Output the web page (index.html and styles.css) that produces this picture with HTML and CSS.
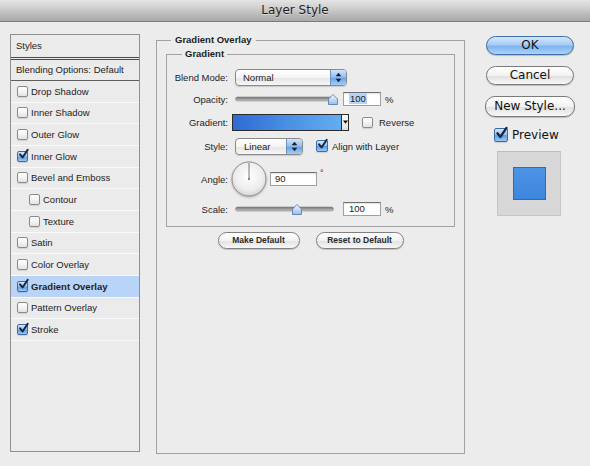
FILE: index.html
```html
<!DOCTYPE html>
<html>
<head>
<meta charset="utf-8">
<title>Layer Style</title>
<link rel="stylesheet" href="styles.css">
</head>
<body>
<div class="titlebar">Layer Style</div>
<div class="main">
  <aside class="styles-panel">
    <div class="sp-head">Styles</div>
    <div class="sp-blend">Blending Options: Default</div>
    <ul class="sp-list">
      <li><span class="cb"></span>Drop Shadow</li>
      <li><span class="cb"></span>Inner Shadow</li>
      <li><span class="cb"></span>Outer Glow</li>
      <li><span class="cb on"><svg class="tick" viewBox="0 0 12 12"><path d="M2.2 5.8 L5 9.2 L10.6 0.8" fill="none" stroke="#15233f" stroke-width="2.1" stroke-linecap="round" stroke-linejoin="round"/></svg></span>Inner Glow</li>
      <li><span class="cb"></span>Bevel and Emboss</li>
      <li class="sub"><span class="cb"></span>Contour</li>
      <li class="sub"><span class="cb"></span>Texture</li>
      <li><span class="cb"></span>Satin</li>
      <li><span class="cb"></span>Color Overlay</li>
      <li class="active"><span class="cb on"><svg class="tick" viewBox="0 0 12 12"><path d="M2.2 5.8 L5 9.2 L10.6 0.8" fill="none" stroke="#15233f" stroke-width="2.1" stroke-linecap="round" stroke-linejoin="round"/></svg></span>Gradient Overlay</li>
      <li><span class="cb"></span>Pattern Overlay</li>
      <li><span class="cb on"><svg class="tick" viewBox="0 0 12 12"><path d="M2.2 5.8 L5 9.2 L10.6 0.8" fill="none" stroke="#15233f" stroke-width="2.1" stroke-linecap="round" stroke-linejoin="round"/></svg></span>Stroke</li>
    </ul>
  </aside>

  <fieldset class="group outer">
    <legend>Gradient Overlay</legend>
    <fieldset class="group inner">
      <legend>Gradient</legend>

      <div class="row r1">
        <label>Blend Mode:</label>
        <div class="select wide">
          <span class="val">Normal</span>
          <span class="arr"><svg viewBox="0 0 7 11" width="7" height="11"><path d="M3.5 0.8 L6.3 4.2 L0.7 4.2Z M0.7 6.8 L6.3 6.8 L3.5 10.2Z" fill="#142033"/></svg></span>
        </div>
      </div>

      <div class="row r2">
        <label>Opacity:</label>
        <svg class="slider" width="106" height="14" viewBox="0 0 106 14">
          <defs>
            <linearGradient id="tr1" x1="0" y1="0" x2="0" y2="1"><stop offset="0" stop-color="#6f6f6f"/><stop offset="1" stop-color="#c9c9c9"/></linearGradient>
            <linearGradient id="th1" x1="0" y1="0" x2="0" y2="1"><stop offset="0" stop-color="#f4f8fe"/><stop offset="1" stop-color="#94bdf0"/></linearGradient>
          </defs>
          <rect x="0.5" y="5" width="99" height="4" rx="2" fill="url(#tr1)" stroke="#8a8a8a" stroke-width="0.6"/>
          <path d="M93.5 12.5 L93.5 7 L98 2.5 L102.5 7 L102.5 12.5 Z" fill="url(#th1)" stroke="#5a7fb0" stroke-width="0.9" stroke-linejoin="round"/>
        </svg>
        <div class="field w38"><span class="sel">100</span></div>
        <span class="unit">%</span>
      </div>

      <div class="row r3">
        <label>Gradient:</label>
        <div class="swatch">
          <span class="fill"></span>
          <span class="drop"><svg viewBox="0 0 5 4" width="5" height="4"><path d="M0 0.5 L5 0.5 L2.5 3.8Z" fill="#111"/></svg></span>
        </div>
        <span class="cb cb-rev"></span>
        <span class="cb-text rev-text">Reverse</span>
      </div>

      <div class="row r4">
        <label>Style:</label>
        <div class="select small">
          <span class="val">Linear</span>
          <span class="arr"><svg viewBox="0 0 7 11" width="7" height="11"><path d="M3.5 0.8 L6.3 4.2 L0.7 4.2Z M0.7 6.8 L6.3 6.8 L3.5 10.2Z" fill="#142033"/></svg></span>
        </div>
        <span class="cb on cb-align"><svg class="tick" viewBox="0 0 12 12"><path d="M2.2 5.8 L5 9.2 L10.6 0.8" fill="none" stroke="#15233f" stroke-width="2.1" stroke-linecap="round" stroke-linejoin="round"/></svg></span>
        <span class="cb-text align-text">Align with Layer</span>
      </div>

      <div class="row r5">
        <label>Angle:</label>
        <svg class="dial" width="36" height="36" viewBox="0 0 36 36">
          <defs>
            <radialGradient id="dg" cx="0.5" cy="0.42" r="0.6"><stop offset="0" stop-color="#ffffff"/><stop offset="0.7" stop-color="#ececec"/><stop offset="1" stop-color="#d2d2d2"/></radialGradient>
          </defs>
          <circle cx="18" cy="18" r="17" fill="url(#dg)" stroke="#8e8e8e" stroke-width="1"/>
          <line x1="18" y1="18" x2="18" y2="2" stroke="#6a6a6a" stroke-width="0.9"/>
          <circle cx="18" cy="18" r="1" fill="#6a6a6a"/>
        </svg>
        <div class="field w47 angle">90</div>
        <span class="deg">°</span>
      </div>

      <div class="row r6">
        <label>Scale:</label>
        <svg class="slider" width="106" height="14" viewBox="0 0 106 14">
          <defs>
            <linearGradient id="tr2" x1="0" y1="0" x2="0" y2="1"><stop offset="0" stop-color="#6f6f6f"/><stop offset="1" stop-color="#c9c9c9"/></linearGradient>
            <linearGradient id="th2" x1="0" y1="0" x2="0" y2="1"><stop offset="0" stop-color="#f4f8fe"/><stop offset="1" stop-color="#94bdf0"/></linearGradient>
          </defs>
          <rect x="0.5" y="5" width="98" height="4" rx="2" fill="url(#tr2)" stroke="#8a8a8a" stroke-width="0.6"/>
          <path d="M57.5 12.5 L57.5 7 L62 2.5 L66.5 7 L66.5 12.5 Z" fill="url(#th2)" stroke="#5a7fb0" stroke-width="0.9" stroke-linejoin="round"/>
        </svg>
        <div class="field w38">100</div>
        <span class="unit">%</span>
      </div>
    </fieldset>

    <div class="btn-row">
      <button class="mini make">Make Default</button>
      <button class="mini reset">Reset to Default</button>
    </div>
  </fieldset>

  <div class="side">
    <button class="big ok">OK</button>
    <button class="big cancel">Cancel</button>
    <button class="big newstyle">New Style...</button>
    <div class="preview-row">
      <span class="cb on cb-big"><svg class="tick" viewBox="0 0 12 12"><path d="M2.2 5.8 L5 9.2 L10.6 0.8" fill="none" stroke="#15233f" stroke-width="2.1" stroke-linecap="round" stroke-linejoin="round"/></svg></span>
      <span class="preview-label">Preview</span>
    </div>
    <div class="preview-box"><div class="preview-square"></div></div>
  </div>
</div>
</body>
</html>
```

FILE: styles.css
```css
* { box-sizing: border-box; }

html, body { margin: 0; padding: 0; }

body {
  width: 590px;
  height: 466px;
  overflow: hidden;
  background: #ececec;
  font-family: "Liberation Sans", Arial, sans-serif;
  font-size: 9.5px;
  color: #1c1c1c;
}

.titlebar {
  height: 22px;
  border-bottom: 1px solid #7c7c7c;
  background: linear-gradient(#e4e4e4, #cbcbcb 45%, #b6b6b6 75%, #a9a9a9);
  text-align: center;
  font: 12px/21px "DejaVu Sans", sans-serif;
  color: #1e1e1e;
  text-shadow: 0 1px 0 rgba(255,255,255,0.45);
}

.main {
  display: flex;
  align-items: flex-start;
}

/* ---------- left styles list ---------- */
.styles-panel {
  margin: 12px 0 0 10px;
  width: 130px;
  height: 418px;
  border: 1px solid #8f8f8f;
  background: #ebebeb;
}

.sp-head {
  height: 25px;
  line-height: 22px;
  padding-left: 5px;
  border-bottom: 3px double #4a4a4a;
}

.sp-blend {
  height: 21px;
  line-height: 20px;
  padding-left: 5px;
  border-bottom: 1px solid #5f5f5f;
}

.sp-list {
  list-style: none;
  margin: 0;
  padding: 0;
}

.sp-list li {
  height: 21.67px;
  display: flex;
  align-items: center;
  gap: 3px;
  padding-left: 6px;
  border-bottom: 1px solid #fafafa;
}

.sp-list li.sub { padding-left: 18px; }

.sp-list li.active {
  background: #b8d4f8;
  font-weight: bold;
}

/* ---------- checkboxes ---------- */
.cb {
  flex: none;
  width: 11px;
  height: 11px;
  border: 1px solid #8b8b8b;
  border-radius: 2px;
  background: linear-gradient(#ffffff, #f3f3f3 50%, #e2e2e2);
  box-shadow: 0 1px 1px rgba(0,0,0,0.12);
  display: inline-flex;
  align-items: center;
  justify-content: center;
  overflow: visible;
}

.cb.on {
  border-color: #3f6aa6;
  background: linear-gradient(#d8e8fb, #8fbdf0 50%, #5d9ce6 55%, #9ac8f5);
}

.cb .tick {
  width: 11px;
  height: 11px;
  margin: -3px 0 0 1px;
  overflow: visible;
  flex: none;
}

.cb-big {
  width: 14px;
  height: 14px;
}

.cb-big .tick {
  width: 13px;
  height: 13px;
  margin: -4px 0 0 1px;
}

/* ---------- fieldset groups ---------- */
.group {
  margin: 0;
  border: 1px solid #a2a2a2;
  min-width: 0;
}

.group legend {
  font-weight: bold;
  line-height: 12px;
  height: 12px;
}

.outer {
  margin: 12px 0 0 16px;
  width: 309px;
  height: 420px;
  padding: 2px 9px 0 9px;
}

.outer > legend {
  padding: 0 4px;
  margin-left: 5px;
}

.inner {
  width: 289px;
  padding: 6px 0 8px 0;
}

.inner > legend {
  padding: 0 3px;
  margin-left: 15px;
}

/* ---------- rows ---------- */
.row {
  display: flex;
  align-items: center;
}

.row label {
  flex: none;
  width: 61px;
  margin-right: 7px;
  text-align: right;
}

.r1 { height: 22px; }
.r2 { height: 22px; }
.r3 { height: 24px; }
.r4 { height: 24px; }
.r5 { height: 42px; }
.r6 { height: 18px; }

/* popup selects */
.select {
  flex: none;
  display: flex;
  height: 17px;
  border: 1px solid #8a8a8a;
  border-radius: 4px;
  overflow: hidden;
  background: linear-gradient(#ffffff, #f4f4f4 50%, #e6e6e6 55%, #f6f6f6);
  box-shadow: 0 1px 1px rgba(0,0,0,0.15);
}

.select .val {
  flex: 1;
  line-height: 15px;
  padding-left: 7px;
}

.select .arr {
  flex: none;
  width: 16px;
  border-left: 1px solid #6f8fbf;
  background: linear-gradient(#d3e4f9, #93bdf0 48%, #6aa3e8 55%, #a4cdf6);
  display: flex;
  align-items: center;
  justify-content: center;
}

.select.wide { width: 112px; }
.select.small { width: 68px; }
.select.small .val { padding-left: 8px; }

/* sliders */
.slider {
  flex: none;
  display: block;
}

/* text fields */
.field {
  flex: none;
  height: 14px;
  margin-left: 2px;
  padding-left: 5px;
  line-height: 12px;
  background: #ffffff;
  border: 1px solid #a0a0a0;
  border-top-color: #707070;
  box-shadow: inset 0 1px 1px rgba(0,0,0,0.12);
}

.field.w38 { width: 38px; }
.field.w47 { width: 47px; }
.field.angle { margin-left: 3px; padding-left: 4px; }

.field .sel {
  background: #b3d3fb;
  padding: 0 1px;
}

.unit { margin-left: 4px; }

.deg {
  margin-left: 3px;
  align-self: flex-start;
  margin-top: 10px;
  font-size: 9px;
}

/* gradient swatch */
.swatch {
  flex: none;
  display: flex;
  width: 117px;
  height: 17px;
  margin-left: -3px;
  border: 1px solid #2b2b2b;
}

.swatch .fill {
  flex: 1;
  background: linear-gradient(90deg, #2d6bd3, #4a8fe3 50%, #63adf0);
}

.swatch .drop {
  flex: none;
  width: 7px;
  border-left: 1px solid #2b2b2b;
  background: linear-gradient(#ffffff, #dedede);
  display: flex;
  align-items: center;
  justify-content: center;
}

.cb-rev { margin-left: 13px; }
.rev-text { margin-left: 6px; }
.cb-align { margin-left: 13px; width: 12px; height: 12px; }
.align-text { margin-left: 4px; }

/* angle dial */
.dial {
  flex: none;
  display: block;
  margin-left: -4px;
  filter: drop-shadow(0 1px 1px rgba(0,0,0,0.25));
}

/* bottom mini buttons */
.btn-row {
  display: flex;
  justify-content: center;
  gap: 16px;
  margin-top: 5px;
}

.mini {
  height: 17px;
  padding: 0;
  border: 1px solid #808080;
  border-radius: 9px;
  background: linear-gradient(#ffffff, #f3f3f3 50%, #e3e3e3 55%, #f7f7f7);
  box-shadow: 0 1px 1px rgba(0,0,0,0.18);
  font-family: "Liberation Sans", Arial, sans-serif;
  font-size: 8.5px;
  font-weight: bold;
  color: #2a2a2a;
  line-height: 15px;
}

.mini.make { width: 82px; }
.mini.reset { width: 88px; }

/* ---------- right side ---------- */
.side {
  flex: none;
  width: 90px;
  margin: 14px 0 0 20px;
  display: flex;
  flex-direction: column;
  align-items: flex-start;
}

.big {
  width: 88px;
  height: 19px;
  margin-left: 1px;
  padding: 0;
  border: 1px solid #7a7a7a;
  border-radius: 10px;
  background: linear-gradient(#ffffff, #f2f2f2 50%, #e1e1e1 55%, #f8f8f8);
  box-shadow: 0 1px 1px rgba(0,0,0,0.2);
  font-family: "DejaVu Sans", sans-serif;
  font-size: 12px;
  line-height: 17px;
  color: #111;
}

.big.ok {
  border-color: #3f6ea9;
  background: linear-gradient(#d2e7fc, #a6cdf5 45%, #7fb4ee 55%, #a9d4fa);
}

.big.cancel { margin-top: 11px; }

.big.newstyle {
  margin-top: 11px;
  margin-left: 0;
  width: 90px;
  height: 21px;
  line-height: 19px;
}

.preview-row {
  margin: 11px 0 0 9px;
  display: flex;
  align-items: center;
  height: 14px;
}

.preview-label {
  margin-left: 4px;
  font: 12px "DejaVu Sans", sans-serif;
  color: #111;
}

.preview-box {
  margin: 9px 0 0 12px;
  width: 64px;
  height: 65px;
  background: #d7d7d7;
  border: 1px solid #c6c6c6;
  border-top-color: #bdbdbd;
  padding: 15px 0 0 15px;
}

.preview-square {
  width: 33px;
  height: 33px;
  border: 1px solid #3169b3;
  background: linear-gradient(#4d94e6, #3d86de);
}
```
